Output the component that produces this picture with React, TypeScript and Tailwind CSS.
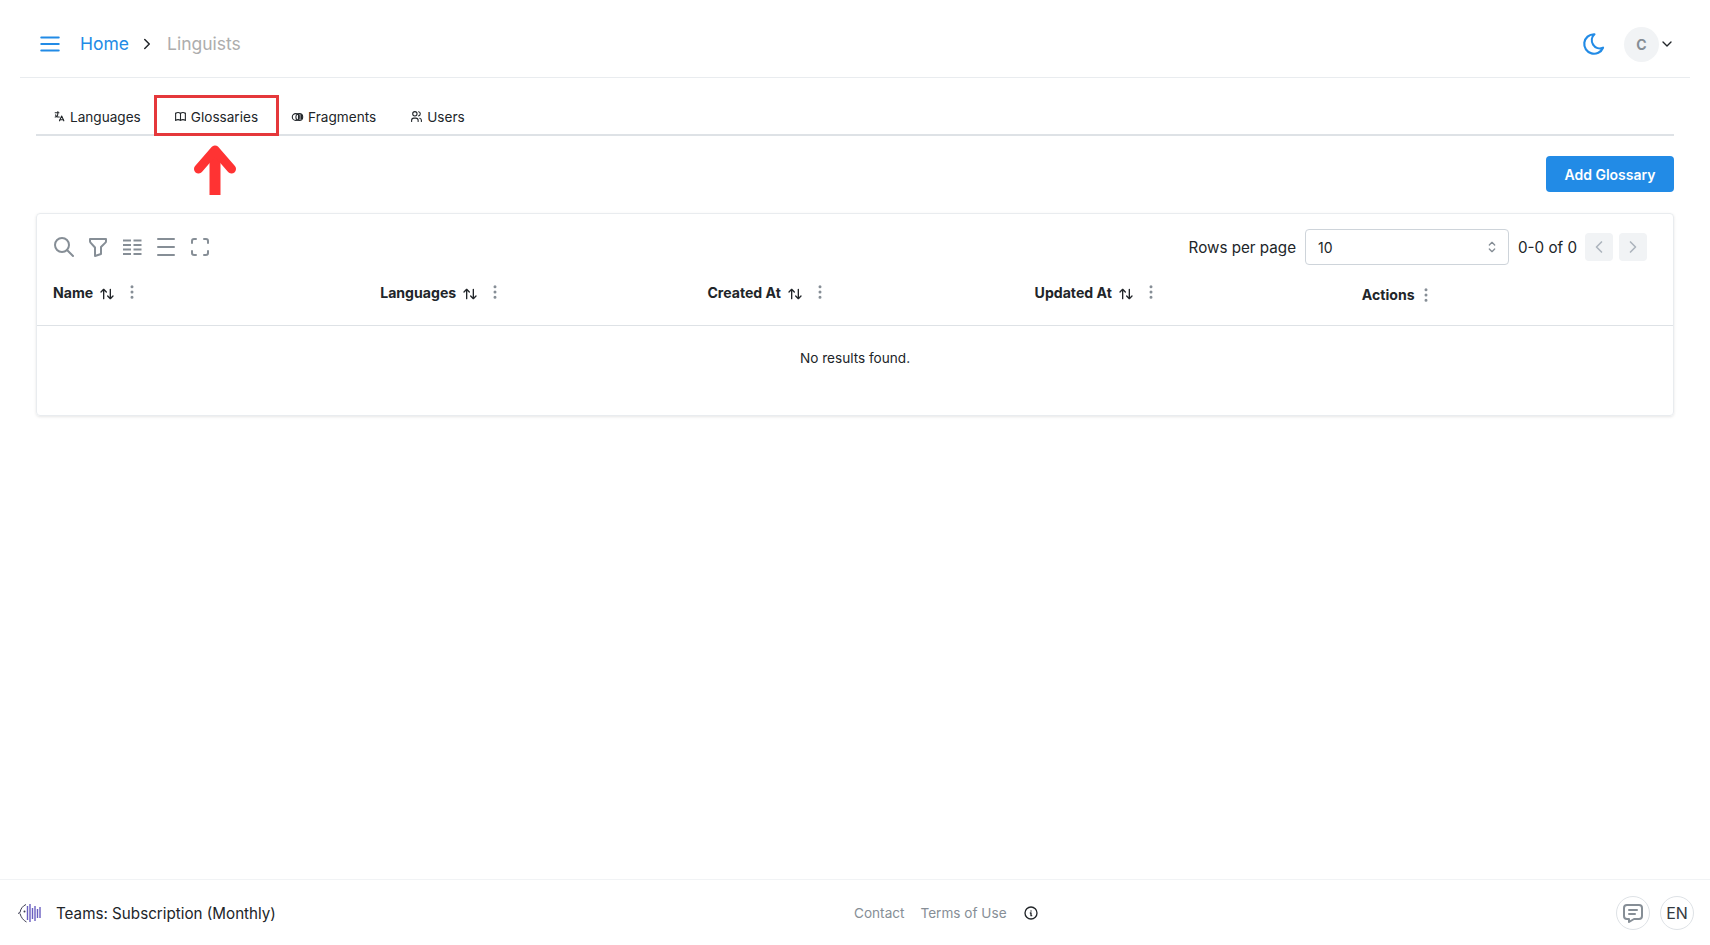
import React from 'react';
import {
  TbMenu2, TbChevronRight, TbChevronDown, TbChevronLeft, TbMoon, TbLanguage, TbBook, TbUsers,
  TbSearch, TbFilter, TbBaselineDensityMedium, TbMaximize, TbArrowsSort, TbDotsVertical,
  TbSelector, TbInfoCircle, TbMessage,
} from 'react-icons/tb';

const ColumnsIcon: React.FC = () => (
  <svg width="24" height="24" viewBox="0 0 24 24" stroke="#868e96" strokeWidth="2" fill="none">
    <path d="M3 5.500h8M3 10h8M3 14.500h8M3 19h8M13.500 5.500h8M13.500 10h8M13.500 14.500h8M13.500 19h8" />
  </svg>
);

const FragmentsIcon: React.FC = () => (
  <svg width="13" height="12" viewBox="0 0 13 12" stroke="#212529" strokeWidth="1.1" fill="none">
    <circle cx="4.7" cy="6" r="3.4" />
    <circle cx="8.3" cy="6" r="3.4" />
    <path d="M7.500 3.5v5M9 3.2v5.6M10.500 4v4" />
  </svg>
);

const Logo: React.FC = () => (
  <svg width="26" height="24" viewBox="0 0 26 24" fill="none">
    <path d="M8 3.5C4.5 5 2.5 8 2 11.5M2 11.5l-2 1M2 12.5C3 16.5 5.5 19.500 8.500 21" stroke="#3f3f55" strokeWidth="1" />
    <circle cx="6.500" cy="10.500" r="1" fill="#3f3f55" />
    <path d="M9.500 5v14M12 3v18M14.500 7v11M17 5v15M19.500 8v9M22 6v11" stroke="#6a5fc0" strokeWidth="1.400" />
  </svg>
);

const Tab: React.FC<{ icon: React.ReactNode; label: string; className: string }> = ({ icon, label, className }) => (
  <div className={`flex items-center gap-[4px] text-[13.6px] text-[#212529] ${className}`}>
    {icon}
    <span>{label}</span>
  </div>
);

const HeadCell: React.FC<{ label: string; sort?: boolean }> = ({ label, sort = true }) => (
  <div className={`flex items-center pl-4 ${sort ? 'pt-[14px]' : 'pt-[19px]'}`}>
    <span className="text-[14.1px] font-bold text-[#212529]">{label}</span>
    {sort && <TbArrowsSort className="ml-[6px] mt-[3px] text-[#212529]" size={16} />}
    <TbDotsVertical className={`${sort ? 'ml-[8px]' : 'ml-[2px]'} text-[#868e96]`} size={18} />
  </div>
);

export default function App() {
  return (
    <div className="flex h-screen w-full flex-col overflow-hidden bg-white font-['Inter',sans-serif]">
      {/* Header */}
      <header className="mx-5 flex h-[78px] shrink-0 items-center border-b border-[#e9ecef] pl-[17px] pr-[15px] pt-[11px]">
        <TbMenu2 className="text-[#228be6]" size={26} />
        <span className="ml-[17px] text-[17.5px] text-[#228be6]">Home</span>
        <TbChevronRight className="ml-[9px] text-[#212529]" size={18} />
        <span className="ml-[11px] text-[17.5px] text-[#adadad]">Linguists</span>
        <TbMoon className="ml-auto translate-x-[1px] text-[#228be6]" size={26} />
        <div className="ml-[18px] flex h-[35px] w-[35px] items-center justify-center rounded-full bg-[#f1f3f5] text-[14px] font-bold text-[#868e96]">
          C
        </div>
        <TbChevronDown className="text-[#212529]" size={16} />
      </header>

      <main className="flex flex-1 flex-col px-9">
        {/* Tabs */}
        <div className="relative mt-[17px] flex h-[41px] shrink-0 items-center border-b-2 border-[#dee2e6] pt-[5px]">
          <Tab className="ml-[17px]" icon={<TbLanguage size={13} />} label="Languages" />
          <Tab className="ml-[33px]" icon={<TbBook size={13} />} label="Glossaries" />
          <Tab className="ml-[33px]" icon={<FragmentsIcon />} label="Fragments" />
          <Tab className="ml-[34px]" icon={<TbUsers size={13} />} label="Users" />
          {/* callout drawn over the tab */}
          <div className="absolute left-[118px] top-0 h-[41px] w-[125px] border-[3px] border-[#e5383b]" />
          <svg className="absolute left-[158px] top-[50px]" width="42" height="52" viewBox="0 0 42 52" fill="none">
            <path d="M21 6V50" stroke="#ff3333" strokeWidth="11" />
            <path d="M4.500 24L21 5L37.500 24" stroke="#ff3333" strokeWidth="9" strokeLinecap="round" strokeLinejoin="round" />
          </svg>
        </div>

        <div className="mt-5 flex shrink-0 justify-end">
          <button className="h-9 w-[128px] rounded-[4px] bg-[#228be6] text-[14px] font-semibold text-white">Add Glossary</button>
        </div>

        {/* Table card */}
        <div className="mt-[21px] h-[203px] shrink-0 rounded-[4px] border border-[#e9ecef] shadow-[0_1px_3px_rgba(0,0,0,0.1)]">
          <div className="h-[112px] border-b border-[#dee2e6]">
            <div className="flex items-center justify-between pl-[15px] pr-[26px] pt-[15px]">
              <div className="flex items-center gap-[10px] text-[#868e96]">
                <TbSearch size={24} />
                <TbFilter size={24} />
                <ColumnsIcon />
                <TbBaselineDensityMedium size={24} />
                <TbMaximize size={24} />
              </div>
              <div className="flex items-center text-[15.2px] text-[#212529]">
                <span className="pt-[2px]">Rows per page</span>
                <div className="ml-[9px] flex h-9 w-[204px] items-center justify-between rounded-[4px] border border-[#ced4da] pl-3 pr-[8px] text-[14px]">
                  <span className="pt-[1px]">10</span>
                  <TbSelector className="text-[#868e96]" size={16} />
                </div>
                <span className="ml-[9px] pt-[2px]">0-0 of 0</span>
                <div className="ml-2 flex h-7 w-7 items-center justify-center rounded-[4px] bg-[#f1f3f5] text-[#adb5bd]">
                  <TbChevronLeft size={20} />
                </div>
                <div className="ml-[6px] flex h-7 w-7 items-center justify-center rounded-[4px] bg-[#f1f3f5] text-[#adb5bd]">
                  <TbChevronRight size={20} />
                </div>
              </div>
            </div>
            <div className="grid grid-cols-5">
              <HeadCell label="Name" />
              <HeadCell label="Languages" />
              <HeadCell label="Created At" />
              <HeadCell label="Updated At" />
              <HeadCell label="Actions" sort={false} />
            </div>
          </div>
          <p className="pt-[22px] text-center text-[13.6px] text-[#212529]">No results found.</p>
        </div>
      </main>

      {/* Footer */}
      <footer className="relative flex h-[66px] shrink-0 items-center border-t border-[#f1f3f5] pl-[18px] pr-4">
        <Logo />
        <span className="ml-[12px] pt-[3px] text-[15.2px] text-[#212529]">Teams: Subscription (Monthly)</span>
        <div className="absolute left-[854px] flex items-center pt-[1px] text-[13.6px] text-[#868e96]">
          <span>Contact</span>
          <span className="ml-4">Terms of Use</span>
          <TbInfoCircle className="ml-4 text-[#212529]" size={16} />
        </div>
        <div className="ml-auto flex h-[34px] w-[34px] items-center justify-center rounded-full border border-[#dee2e6] text-[#868e96]">
          <TbMessage size={24} />
        </div>
        <div className="ml-[10px] flex h-[34px] w-[34px] items-center justify-center rounded-full border border-[#dee2e6] text-[16px] text-[#343a40]">
          EN
        </div>
      </footer>
    </div>
  );
}
